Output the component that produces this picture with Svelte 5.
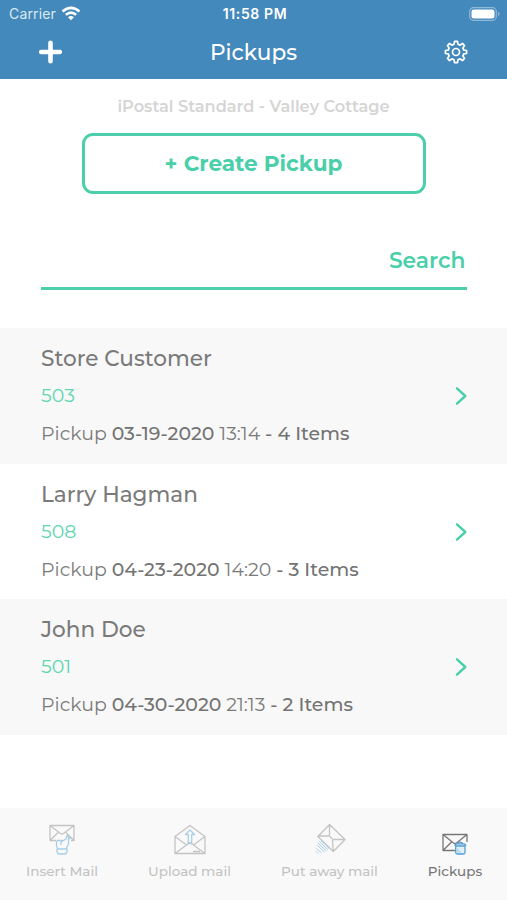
<script lang="ts">
  type Pickup = {
    name: string;
    box: string;
    date: string;
    time: string;
    items: number;
  };

  const pickups: Pickup[] = [
    { name: "Store Customer", box: "503", date: "03-19-2020", time: "13:14", items: 4 },
    { name: "Larry Hagman", box: "508", date: "04-23-2020", time: "14:20", items: 3 },
    { name: "John Doe", box: "501", date: "04-30-2020", time: "21:13", items: 2 },
  ];

  const tabs = [
    { id: "insert", label: "Insert Mail" },
    { id: "upload", label: "Upload mail" },
    { id: "away", label: "Put away mail" },
    { id: "pickups", label: "Pickups" },
  ];

  let active = $state("pickups");

  // Eight teeth, four points per tooth
  function gearPath() {
    const points: string[] = [];
    for (let i = 0; i < 8; i++) {
      for (const [offset, r] of [[-14, 8], [-8, 10.7], [8, 10.7], [14, 8]]) {
        const a = ((i * 45 + offset) * Math.PI) / 180;
        points.push(`${(12 + r * Math.sin(a)).toFixed(2)} ${(12 - r * Math.cos(a)).toFixed(2)}`);
      }
    }
    return `M${points.join("L")}Z`;
  }
</script>

{#snippet tabIcon(id: string)}
  <svg class="tab-icon" width="36" height="36" viewBox="0 0 36 36">
    {#if id === "insert"}
      <path d="M12 19.5H6V4.5H30V19.5H27M6 4.5L16.5 12.5Q18 13.5 19.5 12.5L30 4.5M6 19.5L14 11.5M30 19.5L22 11.5" />
      <path class="blue" d="M12.5 19.5V25L14 28H22L24.5 23V16L23 14.5L22 18L17 21V24M13 19.5H19M13 28H23V31L21.5 33H14.5L13 31ZM24 15.5L26.5 18" />
    {:else if id === "upload"}
      <path d="M3 15.5L18 4.5L33 15.5V32.5H3ZM3 15.5L14.5 24L3 32.5M33 15.5L21.5 24L33 32.5M14.5 24L18 21.5L21.5 24M21 30.5H28" />
      <path class="blue" d="M18 9L13.5 13.5H16.3V22.5H19.7V13.5H22.5Z" />
    {:else if id === "away"}
      <path d="M17.5 3.5L33 18.5L21.3 30.5L5.8 15.5ZM17.5 3.5V13.8Q17.5 15 16 15H5.8M17.5 15L20.5 18M33 18.5H22Q20.5 18.5 20.5 20L21.3 30.5" />
      <path class="blue hatch" d="M9 19.5L17 27.3M7.3 20.5L15.7 28.7M6 22L14.3 30M5 24L12.5 31M4.5 27.5L9.5 32M4 30.5L6 32.5" />
    {:else}
      <path d="M18 29.5H6V13.5H30V21M6 13.5L16.5 22Q18 23 19.5 22L30 13.5M6 29.5L14.5 21" />
      <path class="blue" d="M18.7 25H28V31.5Q28 33 26.5 33H20.2Q18.7 33 18.7 31.5ZM18 25Q18 22.8 20 22.8H26.7Q28.7 22.8 28.7 25M20.5 22.8Q23.3 19.5 26 22.8" />
      <path class="blue detail" d="M20.8 27.5V30.8H24" />
    {/if}
  </svg>
{/snippet}

<div class="screen">
  <header>
    <div class="status">
      <div class="carrier">
        <span>Carrier</span>
        <svg width="20" height="15" viewBox="0 0 20 15">
          <path d="M1.5 5.5Q10-1.8 18.5 5.5M4.8 8.8Q10 4.4 15.2 8.8" fill="none" stroke="#fff" stroke-width="2.5" />
          <path d="M7 11.2Q10 8.8 13 11.2L10 14.2Z" fill="#fff" />
        </svg>
      </div>
      <time>11:58 PM</time>
      <svg class="battery" width="32" height="14" viewBox="0 0 32 14">
        <rect x=".7" y=".7" width="26.6" height="12.6" rx="3.8" fill="none" stroke="#8fb9d8" stroke-width="1.2" />
        <rect x="2.5" y="2.5" width="23" height="9" rx="2.3" fill="#fff" />
        <path d="M29 4.8Q30.5 5.5 30.5 7T29 9.2Z" fill="#8fb9d8" />
      </svg>
    </div>
    <div class="nav">
      <button aria-label="Add">
        <svg width="24" height="24" viewBox="0 0 24 24">
          <path d="M12.5 2.7V21.3M3.2 12H21.8" stroke="#fff" stroke-width="4.6" stroke-linecap="round" />
        </svg>
      </button>
      <h1>Pickups</h1>
      <button aria-label="Settings">
        <svg width="24" height="24" viewBox="0 0 24 24" fill="none" stroke="#fff" stroke-width="1.7" stroke-linejoin="round">
          <path d={gearPath()} />
          <circle cx="12" cy="12" r="3.5" />
        </svg>
      </button>
    </div>
  </header>

  <main>
    <p class="location">iPostal Standard - Valley Cottage</p>
    <button class="create"><span>+ Create Pickup</span></button>
    <div class="search"><span>Search</span></div>

    <ul>
      {#each pickups as pickup (pickup.box)}
        <li>
          <div>
            <h2>{pickup.name}</h2>
            <p class="box">{pickup.box}</p>
            <p class="details">
              Pickup <b>{pickup.date}</b> {pickup.time} <b>- {pickup.items} Items</b>
            </p>
          </div>
          <svg width="14" height="20" viewBox="0 0 14 20">
            <path d="M2 2.3L10.3 10L2 17.7" />
          </svg>
        </li>
      {/each}
    </ul>
  </main>

  <nav class="tabs">
    {#each tabs as tab (tab.id)}
      <button class="tab {tab.id}" class:active={active === tab.id} onclick={() => (active = tab.id)}>
        {@render tabIcon(tab.id)}
        <span>{tab.label}</span>
      </button>
    {/each}
  </nav>
</div>

<style>
  :global(body) {
    margin: 0;
  }

  .screen {
    --green: #4bcfaa;
    display: flex;
    flex-direction: column;
    width: 507px;
    height: 900px;
    overflow: hidden;
    background: #fff;
    color: #7a7a7a;
    font-family: Montserrat, Inter, sans-serif;
  }

  button {
    padding: 0;
    border: 0;
    background: none;
    color: inherit;
    font: inherit;
  }

  svg {
    display: block;
  }

  h1,
  h2,
  p,
  ul {
    margin: 0;
    padding: 0;
    font-weight: 400;
  }

  header {
    height: 79px;
    background: #4489bb;
    color: #fff;
  }

  .status {
    display: grid;
    grid-template-columns: 1fr auto 1fr;
    align-items: center;
    height: 27px;
    padding: 0 6px 0 9px;
    font-family: Inter, sans-serif;
    font-size: 14px;
  }

  .carrier {
    display: flex;
    align-items: center;
    gap: 5px;
    color: #dbe9f3;
    letter-spacing: 0.15px;
  }

  time {
    font-size: 14px;
    font-weight: 600;
    letter-spacing: 0.6px;
  }

  .battery {
    justify-self: end;
  }

  .nav {
    display: grid;
    grid-template-columns: 24px 1fr 24px;
    align-items: center;
    height: 50px;
    padding: 0 39px 0 38px;
  }

  h1 {
    padding-left: 1px;
    font-size: 21.6px;
    font-weight: 500;
    text-align: center;
  }

  main {
    display: flex;
    flex-direction: column;
    align-items: center;
    flex: 1;
  }

  .location {
    margin-top: 17px;
    color: #d5d5d5;
    font-size: 16.2px;
    font-weight: 600;
    line-height: 20px;
  }

  .create {
    box-sizing: border-box;
    width: 344px;
    height: 61px;
    margin-top: 17px;
    padding-bottom: 2px;
    border: 3px solid var(--green);
    border-radius: 11px;
    color: var(--green);
    font-size: 21.6px;
    font-weight: 700;
  }

  .search {
    box-sizing: border-box;
    width: 426px;
    height: 59px;
    margin-top: 37px;
    padding: 15px 1px 0 0;
    border-bottom: 3px solid var(--green);
    color: var(--green);
    font-size: 21.8px;
    font-weight: 600;
    line-height: 28px;
    text-align: right;
  }

  ul {
    width: 100%;
    margin-top: 38px;
    list-style: none;
  }

  li {
    display: flex;
    align-items: center;
    justify-content: space-between;
    box-sizing: border-box;
    height: 135.5px;
    padding: 1px 38px 0 41px;
  }

  li:nth-child(odd) {
    background: #f8f8f8;
  }

  li svg path {
    fill: none;
    stroke: var(--green);
    stroke-width: 2.4;
    stroke-linecap: round;
    stroke-linejoin: round;
  }

  h2 {
    font-size: 21.6px;
    font-weight: 500;
    line-height: 38px;
  }

  .box {
    color: #5dd6b2;
    font-size: 19px;
    line-height: 38px;
  }

  .details {
    font-size: 18.9px;
    line-height: 38px;
    white-space: nowrap;
  }

  .details b {
    color: #737373;
    font-weight: 500;
  }

  .tabs {
    display: flex;
    height: 92px;
    background: #f9f9f9;
  }

  .tab {
    display: flex;
    flex-direction: column;
    align-items: center;
    padding-top: 13px;
    color: #c3c3c3;
    font-size: 13.5px;
    font-weight: 500;
    line-height: 18px;
    white-space: nowrap;
  }

  .tab span {
    margin-top: 5px;
  }

  .insert {
    width: 124px;
  }

  .upload {
    width: 131px;
  }

  .away {
    width: 149px;
  }

  .pickups {
    width: 102px;
  }

  .tab.active {
    color: #777;
  }

  .tab-icon {
    fill: none;
    stroke: #c4c4c4;
    stroke-width: 1.3;
    stroke-linejoin: round;
  }

  .blue {
    stroke: #a9cee8;
  }

  .hatch {
    stroke-width: 1;
  }

  .active .tab-icon {
    stroke: #777;
  }

  .active .blue {
    stroke: #559fd3;
    fill: #e3f0f9;
  }

  .active .detail {
    stroke: #a9cee8;
    fill: none;
  }
</style>
